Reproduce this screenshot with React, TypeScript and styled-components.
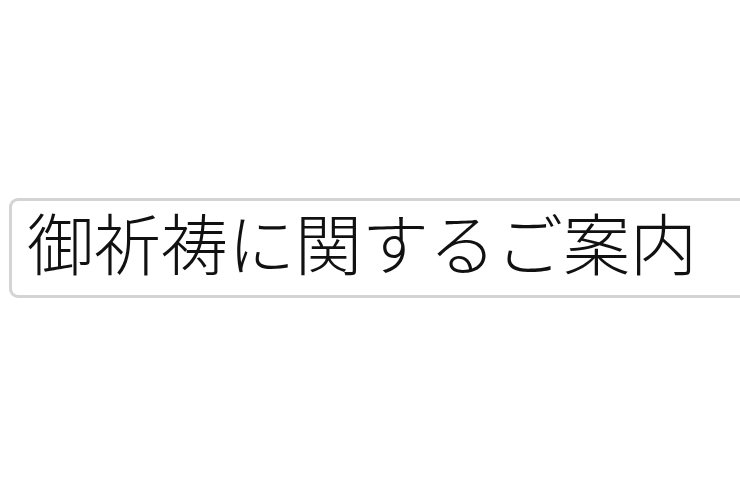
import React from 'react';
import styled, { createGlobalStyle } from 'styled-components';

const GlobalStyle = createGlobalStyle`
  html, body {
    margin: 0;
    padding: 0;
    background: #ffffff;
    overflow: hidden;
  }
`;

const Page = styled.div`
  width: 740px;
  height: 490px;
  padding: 198px 0 0 9px;
  box-sizing: border-box;
  overflow: hidden;
`;

const Field = styled.div`
  width: 800px;
  height: 100px;
  box-sizing: border-box;
  border: 3px solid #d4d4d4;
  border-radius: 9px;
  display: flex;
  align-items: center;
  padding: 0 0 16px 15px;
  font-family: "Noto Sans CJK JP", "Noto Sans", sans-serif;
  font-weight: 300;
  font-size: 67px;
  line-height: 1;
  color: #111111;
  white-space: nowrap;
`;

export default function App() {
  return (
    <>
      <GlobalStyle />
      <Page>
        <Field>御祈祷に関するご案内</Field>
      </Page>
    </>
  );
}
